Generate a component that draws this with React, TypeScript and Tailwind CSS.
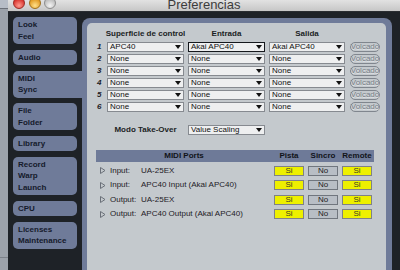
import React from 'react';

const tabs = [
  { lines: ['Look', 'Feel'] },
  { lines: ['Audio'] },
  { lines: ['MIDI', 'Sync'], active: true },
  { lines: ['File', 'Folder'] },
  { lines: ['Library'] },
  { lines: ['Record', 'Warp', 'Launch'] },
  { lines: ['CPU'] },
  { lines: ['Licenses', 'Maintenance'] },
];

const surfaces = [
  { n: '1', control: 'APC40', input: 'Akai APC40', output: 'Akai APC40' },
  { n: '2', control: 'None', input: 'None', output: 'None' },
  { n: '3', control: 'None', input: 'None', output: 'None' },
  { n: '4', control: 'None', input: 'None', output: 'None' },
  { n: '5', control: 'None', input: 'None', output: 'None' },
  { n: '6', control: 'None', input: 'None', output: 'None' },
];

const ports = [
  { kind: 'Input:', name: 'UA-25EX' },
  { kind: 'Input:', name: 'APC40 Input (Akai APC40)' },
  { kind: 'Output:', name: 'UA-25EX' },
  { kind: 'Output:', name: 'APC40 Output (Akai APC40)' },
];

function Select({ value, width, focused }: { value: string; width: string; focused?: boolean }) {
  return (
    <div
      className={`${width} h-[10px] flex items-center justify-between pl-[2px] pr-[2px] bg-[#eeeff0] text-[8px] leading-none text-[#111] ${
        focused ? 'border-[1.5px] border-[#15181d]' : 'border border-[#868a90]'
      }`}
    >
      <span>{value}</span>
      <svg width="6" height="4" viewBox="0 0 6 4">
        <polygon points="0,0 6,0 3,4" fill="#111" />
      </svg>
    </div>
  );
}

function Toggle({ on }: { on: boolean }) {
  return (
    <div className="w-[34px] flex justify-center">
      <div
        className={`w-[30px] h-[10px] flex items-center justify-center text-[8px] leading-none border ${
          on ? 'bg-[#eef000] border-[#7f8187] text-[#3a3a20]' : 'bg-[#b8bec5] border-[#70767e] text-[#222]'
        }`}
      >
        {on ? 'Si' : 'No'}
      </div>
    </div>
  );
}

export default function App() {
  return (
    <div className="w-[400px] h-[270px] flex overflow-hidden bg-[#1e2227] font-['Liberation_Sans',Arial,sans-serif]">
      {/* desktop strip */}
      <div className="w-[8px] flex flex-col bg-[#9ca2aa]">
        <div className="h-[9px] bg-[#b7bdc7] border-b border-[#6c7079]" />
        <div className="flex-1" />
        <div className="h-[13px] border-t border-[#7c8189]" />
      </div>

      <div className="flex-1 flex flex-col">
        {/* Title bar */}
        <div className="h-[12px] relative overflow-hidden flex items-start bg-gradient-to-b from-[#e2e2e2] to-[#c6c6c6] border-b border-[#2a2d31]">
          <div className="flex gap-[3.5px] pl-[5px] -mt-[3px]">
            <div className="w-[12px] h-[12px] rounded-full bg-[radial-gradient(circle_at_50%_75%,#ff9b8f,#d8322b_70%)] border border-[#9b2a25]" />
            <div className="w-[12px] h-[12px] rounded-full bg-[radial-gradient(circle_at_50%_75%,#ffe08a,#e29a22_70%)] border border-[#a0701c]" />
            <div className="w-[12px] h-[12px] rounded-full bg-[radial-gradient(circle_at_50%_75%,#f4f4f4,#bcbcbc_70%)] border border-[#8d8d8d]" />
          </div>
          <div className="absolute inset-x-0 top-[-2px] text-center text-[13px] leading-[13px] text-[#3c3c3c]">
            Preferencias
          </div>
        </div>

        <div className="flex-1 flex">
          {/* Sidebar */}
          <div className="w-[74px] flex flex-col gap-[5.5px] pt-[5px] pl-[5px]">
            {tabs.map((t) => (
              <div
                key={t.lines[0]}
                className={`py-[2px] pl-[5px] bg-[#6f7b99] text-[8px] leading-[11.5px] font-bold text-[#151a2b] whitespace-nowrap ${
                  t.active ? 'w-[69px] rounded-l-[5px]' : 'w-[64px] rounded-[5px]'
                }`}
              >
                {t.lines.map((l) => (
                  <div key={l}>{l}</div>
                ))}
              </div>
            ))}
          </div>

          {/* Main panel */}
          <div className="flex-1 mt-[6px] mr-[8px] bg-[#6f7b99] rounded-t-[8px] pl-[5px] pr-[6px] pt-[5px]">
            <div className="h-full bg-[#c4c9cd] rounded-t-[5px] pl-[9px] pt-[5px]">
              {/* column headers */}
              <div className="flex gap-[4px] h-[11px] items-center text-[8px] font-bold text-[#1b1e24] leading-none whitespace-nowrap">
                <div className="w-[7px]" />
                <div className="w-[77px] flex justify-center">Superficie de control</div>
                <div className="w-[77px] flex justify-center">Entrada</div>
                <div className="w-[76px] flex justify-center">Salida</div>
              </div>

              {/* surfaces */}
              <div className="mt-[3px] flex flex-col gap-[2px]">
                {surfaces.map((s) => (
                  <div key={s.n} className="flex items-center h-[10px]">
                    <div className="w-[11px] pl-[1px] text-[8px] font-bold italic text-[#1f2228] leading-none">{s.n}</div>
                    <Select value={s.control} width="w-[77px]" />
                    <div className="w-[4px]" />
                    <Select value={s.input} width="w-[77px]" focused={s.n === '1'} />
                    <div className="w-[4px]" />
                    <Select value={s.output} width="w-[76px]" />
                    <div className="w-[5px]" />
                    <div className="w-[30px] h-[10px] rounded-full border border-[#80868e] flex items-center justify-center text-[8px] leading-none text-[#777d85] [text-shadow:0_1px_0_#e3e6ea] whitespace-nowrap">
                      Volcado
                    </div>
                  </div>
                ))}
              </div>

              {/* take-over */}
              <div className="mt-[13px] flex items-center h-[10px]">
                <div className="w-[11px]" />
                <div className="w-[77px] flex justify-center text-[8px] font-bold text-[#1b1e24] leading-none whitespace-nowrap">Modo Take-Over</div>
                <div className="w-[4px]" />
                <Select value="Value Scaling" width="w-[77px]" />
              </div>

              {/* MIDI ports */}
              <div className="mt-[15px] w-[278px] h-[12px] flex items-center bg-[#6e7a98] text-[8px] font-bold text-[#111318] leading-none">
                <div className="w-[176px] text-center">MIDI Ports</div>
                <div className="w-[34px] text-center">Pista</div>
                <div className="w-[34px] text-center">Sincro</div>
                <div className="w-[34px] text-center">Remote</div>
              </div>
              <div className="pt-[3.5px] w-[278px]">
                {ports.map((p) => (
                  <div key={p.kind + p.name} className="h-[14.5px] flex items-start">
                    <div className="w-[176px] h-[10px] flex items-center text-[8px] leading-none text-[#1d2026]">
                      <svg width="6" height="7" viewBox="0 0 6 7" className="ml-[4px] mr-[4px]">
                        <polygon points="0.5,0.5 5,3.5 0.5,6.5" fill="none" stroke="#6b7079" strokeWidth="1" />
                      </svg>
                      <span className="w-[31px]">{p.kind}</span>
                      <span>{p.name}</span>
                    </div>
                    <Toggle on />
                    <Toggle on={false} />
                    <Toggle on />
                  </div>
                ))}
              </div>
            </div>
          </div>
        </div>
      </div>
    </div>
  );
}
